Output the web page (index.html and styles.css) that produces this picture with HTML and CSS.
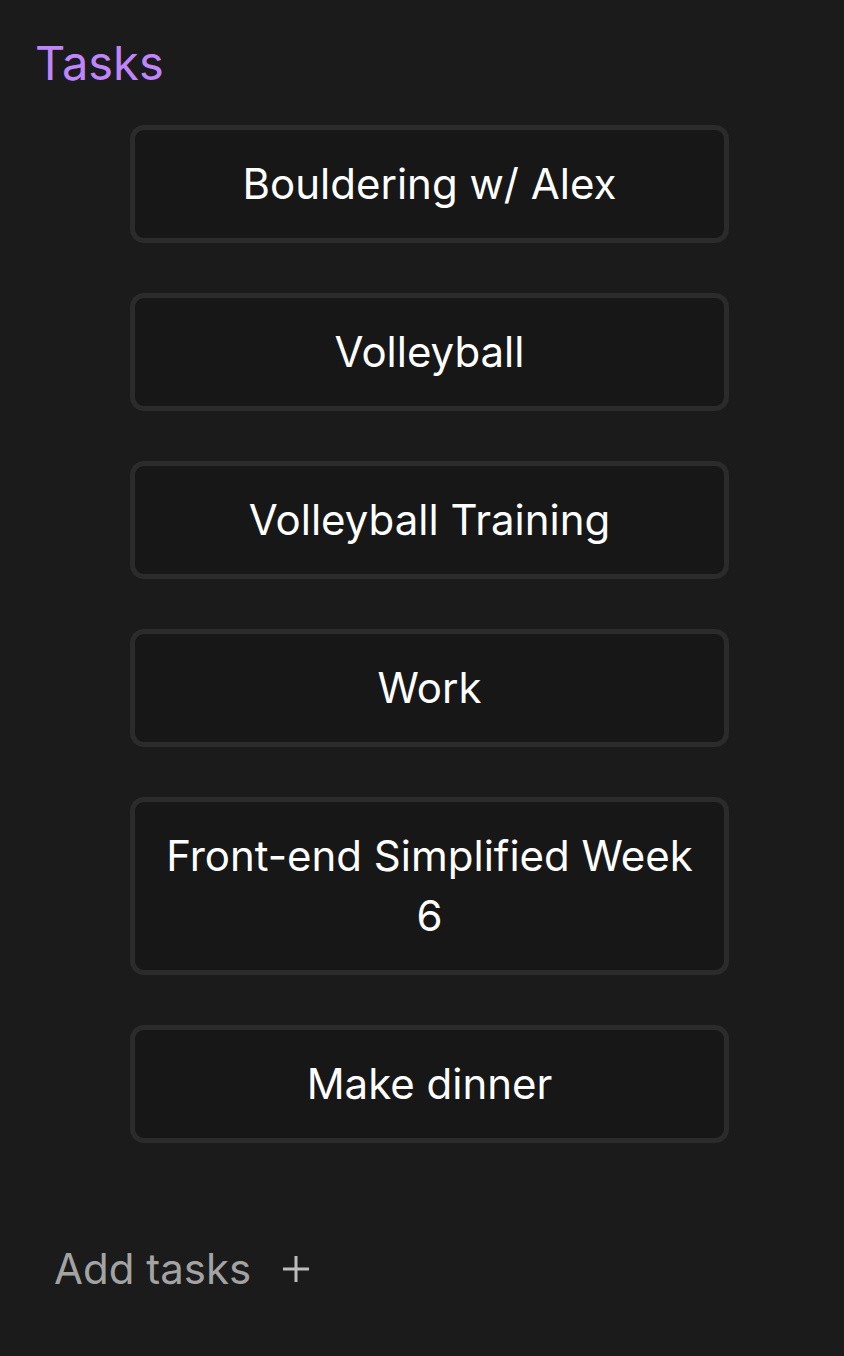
FILE: index.html
```html
<!DOCTYPE html>
<html lang="en">
<head>
    <meta charset="UTF-8">
    <meta name="viewport" content="width=device-width, initial-scale=1.0">
    <title>Tasks</title>
    <link rel="stylesheet" href="styles.css">
</head>
<body>
    <div class="page">
        <h1 class="title">Tasks</h1>
        <div class="task-list">
            <div class="task">Bouldering w/ Alex</div>
            <div class="task">Volleyball</div>
            <div class="task">Volleyball Training</div>
            <div class="task">Work</div>
            <div class="task">Front-end Simplified Week 6</div>
            <div class="task">Make dinner</div>
        </div>
        <div class="add-task">
            <span>Add tasks</span>
            <svg class="plus" width="28" height="28" viewBox="0 0 28 28">
                <path d="M14 1 V27 M1 14 H27" stroke="#bdbdbd" stroke-width="3" fill="none"/>
            </svg>
        </div>
    </div>
</body>
</html>
```

FILE: styles.css
```css
body {
    font-family: 'Inter', 'Noto Sans', sans-serif;
    margin: 0;
    padding: 0;
    background-color: #1b1b1b;
    color: #fff;
    min-height: 100vh;
}
.page {
    padding: 33px 0 0 36px;
}
.title {
    margin: 0 0 0 -1px;
    font-size: 47px;
    font-weight: 400;
    color: #c084fc;
    line-height: 60px;
}
.task-list {
    display: flex;
    flex-direction: column;
    gap: 50px;
    margin-top: 32px;
    padding-left: 94px;
}
.task {
    box-sizing: border-box;
    width: 599px;
    padding: 24px 20px;
    border: 5px solid #2b2b2b;
    border-radius: 14px;
    background-color: #171717;
    font-size: 42px;
    line-height: 60px;
    text-align: center;
}
.add-task {
    display: flex;
    align-items: center;
    gap: 31px;
    margin-top: 100px;
    padding-left: 18px;
    font-size: 42px;
    color: #a3a3a3;
}
.plus {
    display: block;
}
```
